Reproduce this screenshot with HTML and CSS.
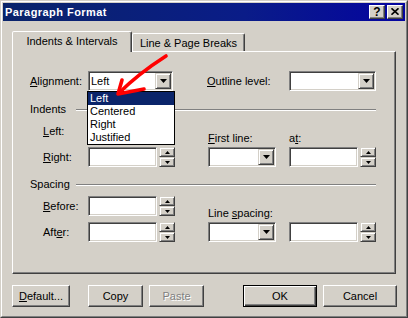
FILE: index.html
```html
<!DOCTYPE html>
<html>
<head>
<meta charset="utf-8">
<title>Paragraph Format</title>
<link rel="stylesheet" href="styles.css">
</head>
<body>
<div class="window">
  <div class="frame">
    <div class="titlebar">
      <span class="title">Paragraph Format</span>
      <div class="tbtns">
        <div class="tbtn help">?</div>
        <div class="tbtn close">
          <svg width="8" height="7" viewBox="0 0 8 7"><path d="M0.5 0.3 L7.5 6.7 M7.5 0.3 L0.5 6.7" stroke="#000" stroke-width="1.6" fill="none"/></svg>
        </div>
      </div>
    </div>
    <div class="content">
      <div class="tabs">
        <div class="tab active">Indents &amp; Intervals</div>
        <div class="tab second">Line &amp; Page Breaks</div>
      </div>
      <div class="panel">
        <div class="row">
          <span class="lbl w-align"><u>A</u>lignment:</span>
          <div class="combo w85 open">
            <span class="ctext">Left</span>
            <span class="dbtn"><svg width="7" height="4" viewBox="0 0 7 4"><polygon points="0,0 7,0 3.5,4" fill="#000"/></svg></span>
            <ul class="list">
              <li class="sel">Left</li>
              <li>Centered</li>
              <li>Right</li>
              <li>Justified</li>
            </ul>
          </div>
          <span class="lbl w-outline"><u>O</u>utline level:</span>
          <div class="combo w87">
            <span class="ctext"></span>
            <span class="dbtn"><svg width="7" height="4" viewBox="0 0 7 4"><polygon points="0,0 7,0 3.5,4" fill="#000"/></svg></span>
          </div>
        </div>

        <div class="group first"><span class="gtitle">Indents</span><span class="etch"></span></div>
        <div class="section">
          <div class="col-left">
            <div class="frow">
              <span class="lbl w-fl"><u>L</u>eft:</span>
              <div class="spinedit">
                <div class="edit"></div>
                <div class="spin">
                  <div class="sbtn"><svg width="5" height="3" viewBox="0 0 5 3"><polygon points="0,3 5,3 2.5,0" fill="#000"/></svg></div>
                  <div class="sbtn"><svg width="5" height="3" viewBox="0 0 5 3"><polygon points="0,0 5,0 2.5,3" fill="#000"/></svg></div>
                </div>
              </div>
            </div>
            <div class="frow">
              <span class="lbl w-fl"><u>R</u>ight:</span>
              <div class="spinedit">
                <div class="edit"></div>
                <div class="spin">
                  <div class="sbtn"><svg width="5" height="3" viewBox="0 0 5 3"><polygon points="0,3 5,3 2.5,0" fill="#000"/></svg></div>
                  <div class="sbtn"><svg width="5" height="3" viewBox="0 0 5 3"><polygon points="0,0 5,0 2.5,3" fill="#000"/></svg></div>
                </div>
              </div>
            </div>
          </div>
          <div class="col-right">
            <div class="fcol">
              <span class="lbl"><u>F</u>irst line:</span>
              <div class="combo w68">
                <span class="ctext"></span>
                <span class="dbtn"><svg width="7" height="4" viewBox="0 0 7 4"><polygon points="0,0 7,0 3.5,4" fill="#000"/></svg></span>
              </div>
            </div>
            <div class="fcol">
              <span class="lbl">a<u>t</u>:</span>
              <div class="spinedit">
                <div class="edit"></div>
                <div class="spin">
                  <div class="sbtn"><svg width="5" height="3" viewBox="0 0 5 3"><polygon points="0,3 5,3 2.5,0" fill="#000"/></svg></div>
                  <div class="sbtn"><svg width="5" height="3" viewBox="0 0 5 3"><polygon points="0,0 5,0 2.5,3" fill="#000"/></svg></div>
                </div>
              </div>
            </div>
          </div>
        </div>

        <div class="group second"><span class="gtitle">Spacing</span><span class="etch"></span></div>
        <div class="section">
          <div class="col-left">
            <div class="frow">
              <span class="lbl w-fl"><u>B</u>efore:</span>
              <div class="spinedit">
                <div class="edit"></div>
                <div class="spin">
                  <div class="sbtn"><svg width="5" height="3" viewBox="0 0 5 3"><polygon points="0,3 5,3 2.5,0" fill="#000"/></svg></div>
                  <div class="sbtn"><svg width="5" height="3" viewBox="0 0 5 3"><polygon points="0,0 5,0 2.5,3" fill="#000"/></svg></div>
                </div>
              </div>
            </div>
            <div class="frow">
              <span class="lbl w-fl">Aft<u>e</u>r:</span>
              <div class="spinedit">
                <div class="edit"></div>
                <div class="spin">
                  <div class="sbtn"><svg width="5" height="3" viewBox="0 0 5 3"><polygon points="0,3 5,3 2.5,0" fill="#000"/></svg></div>
                  <div class="sbtn"><svg width="5" height="3" viewBox="0 0 5 3"><polygon points="0,0 5,0 2.5,3" fill="#000"/></svg></div>
                </div>
              </div>
            </div>
          </div>
          <div class="col-right">
            <div class="fcol">
              <span class="lbl">Line <u>s</u>pacing:</span>
              <div class="combo w68">
                <span class="ctext"></span>
                <span class="dbtn"><svg width="7" height="4" viewBox="0 0 7 4"><polygon points="0,0 7,0 3.5,4" fill="#000"/></svg></span>
              </div>
            </div>
            <div class="fcol">
              <span class="lbl">&nbsp;</span>
              <div class="spinedit">
                <div class="edit"></div>
                <div class="spin">
                  <div class="sbtn"><svg width="5" height="3" viewBox="0 0 5 3"><polygon points="0,3 5,3 2.5,0" fill="#000"/></svg></div>
                  <div class="sbtn"><svg width="5" height="3" viewBox="0 0 5 3"><polygon points="0,0 5,0 2.5,3" fill="#000"/></svg></div>
                </div>
              </div>
            </div>
          </div>
        </div>
      </div>

      <div class="buttons">
        <div class="btn b-default"><span><u>D</u>efault...</span></div>
        <div class="btn b-copy">Copy</div>
        <div class="btn b-paste disabled">Paste</div>
        <div class="btn b-ok default">OK</div>
        <div class="btn b-cancel">Cancel</div>
      </div>
    </div>
  </div>
</div>
<svg class="arrow" width="408" height="318" viewBox="0 0 408 318">
  <path d="M166 56 C 152 65, 136 76, 119 93" stroke="#ff0000" stroke-width="3.6" fill="none" stroke-linecap="round"/>
  <path d="M122 80 L118 94 L144 89" stroke="#ff0000" stroke-width="3.6" fill="none" stroke-linecap="round" stroke-linejoin="round"/>
</svg>
</body>
</html>
```

FILE: styles.css
```css
* { box-sizing: border-box; }
html, body { margin: 0; padding: 0; }
body {
  width: 408px;
  height: 318px;
  overflow: hidden;
  position: relative;
  background: #d4d0c8;
  font-family: "Liberation Sans", Arial, sans-serif;
  font-size: 11px;
  color: #000;
}
.window {
  width: 408px;
  height: 318px;
  border: 1px solid;
  border-color: #d4d0c8 #404040 #404040 #d4d0c8;
  background: #d4d0c8;
}
.frame {
  height: 100%;
  border: 1px solid;
  border-color: #fff #808080 #808080 #fff;
  padding: 1px;
  display: flex;
  flex-direction: column;
}
.titlebar {
  height: 18px;
  flex: none;
  background: linear-gradient(to right, #0a246a 0%, #0a1c88 60%, #0404a0 100%);
  display: flex;
  align-items: center;
  justify-content: space-between;
  padding: 0 2px;
}
.title {
  color: #fff;
  font-weight: bold;
  font-size: 11px;
  letter-spacing: 0.45px;
  line-height: 18px;
  white-space: nowrap;
}
.tbtns { display: flex; gap: 2px; }
.tbtn {
  width: 16px;
  height: 14px;
  background: #d4d0c8;
  border: 1px solid;
  border-color: #fff #404040 #404040 #fff;
  box-shadow: inset -1px -1px #808080;
  display: flex;
  align-items: center;
  justify-content: center;
}
.help {
  font-weight: bold;
  font-size: 12px;
  line-height: 12px;
  padding-bottom: 1px;
}
.close svg { display: block; margin-bottom: 1px; }

.content {
  flex: 1;
  padding: 10px 9px 0 9px;
  display: flex;
  flex-direction: column;
}
.tabs {
  display: flex;
  align-items: flex-end;
  height: 20px;
  position: relative;
  z-index: 1;
}
.tab {
  height: 18px;
  padding-top: 3px;
  text-align: center;
  line-height: 13px;
  white-space: nowrap;
  background: #d4d0c8;
  border: 1px solid;
  border-bottom: none;
  border-color: #fff #404040 transparent #fff;
  box-shadow: inset -1px 0 #808080;
  border-radius: 2px 2px 0 0;
}
.tab.active { width: 120px; height: 21px; margin-bottom: -1px; }
.tab.second { width: 113px; }

.panel {
  height: 223px;
  flex: none;
  border: 1px solid;
  border-color: #fff #404040 #404040 #fff;
  box-shadow: inset -1px -1px #808080;
  padding: 19px 19px 0 17px;
  position: relative;
}
.row { display: flex; align-items: center; height: 20px; }
.lbl { line-height: 13px; white-space: nowrap; display: block; }
.w-align { width: 58px; }
.w-outline { width: 82px; margin-left: 34px; }
.w-fl { width: 45px; }

.combo {
  position: relative;
  height: 20px;
  background: #fff;
  border: 1px solid;
  border-color: #808080 #fff #fff #808080;
  box-shadow: inset 1px 1px #404040, inset -1px -1px #d4d0c8;
  padding: 1px;
  display: flex;
}
.w85 { width: 85px; }
.w87 { width: 87px; }
.w68 { width: 68px; }
.ctext { flex: 1; line-height: 16px; padding-left: 1px; }
.dbtn {
  width: 16px;
  height: 16px;
  background: #d4d0c8;
  border: 1px solid;
  border-color: #d4d0c8 #404040 #404040 #d4d0c8;
  box-shadow: inset 1px 1px #fff, inset -1px -1px #808080;
  display: flex;
  align-items: center;
  justify-content: center;
}
.dbtn svg { display: block; }
.list {
  position: absolute;
  top: 19px;
  left: -2px;
  width: 88px;
  margin: 0;
  padding: 0;
  list-style: none;
  background: #fff;
  border: 1px solid #000;
  z-index: 5;
  color: #000;
}
.list li { height: 13px; line-height: 13px; padding-left: 2px; }
.list li.sel { background: #0a246a; color: #fff; }

.group { display: flex; align-items: center; height: 13px; }
.group.first { margin-top: 12px; }
.group.second { margin-top: 11px; }
.gtitle { width: 46px; line-height: 13px; }
.etch {
  flex: 1;
  height: 2px;
  border-top: 1px solid #808080;
  border-bottom: 1px solid #fff;
}
.section { display: flex; height: 46px; margin-top: 5px; }
.col-left { display: flex; flex-direction: column; gap: 6px; margin-left: 13px; }
.frow { display: flex; align-items: center; height: 20px; }
.col-right { display: flex; gap: 13px; margin-left: 33px; }
.fcol { display: flex; flex-direction: column; justify-content: flex-end; gap: 2px; }

.spinedit { display: flex; gap: 2px; }
.edit {
  width: 69px;
  height: 20px;
  background: #fff;
  border: 1px solid;
  border-color: #808080 #fff #fff #808080;
  box-shadow: inset 1px 1px #404040, inset -1px -1px #d4d0c8;
}
.spin { display: flex; flex-direction: column; width: 16px; height: 20px; }
.sbtn {
  height: 10px;
  background: #d4d0c8;
  border: 1px solid;
  border-color: #d4d0c8 #404040 #404040 #d4d0c8;
  box-shadow: inset 1px 1px #fff, inset -1px -1px #808080;
  display: flex;
  align-items: center;
  justify-content: center;
}
.sbtn svg { display: block; }

.buttons {
  display: flex;
  margin-top: 11px;
  margin-right: -1px;
  height: 22px;
}
.btn {
  height: 22px;
  background: #d4d0c8;
  border: 1px solid;
  border-color: #fff #404040 #404040 #fff;
  box-shadow: inset -1px -1px #808080;
  display: flex;
  align-items: center;
  justify-content: center;
  line-height: 13px;
  white-space: nowrap;
}
.b-default { width: 58px; }
.b-copy { width: 55px; margin-left: 18px; }
.b-paste { width: 55px; margin-left: 6px; }
.b-ok { width: 74px; margin-left: auto; }
.b-cancel { width: 74px; margin-left: 6px; }
.btn.default {
  border-color: #000;
  box-shadow: inset 1px 1px #fff, inset -1px -1px #404040, inset -2px -2px #808080;
}
.btn.disabled { color: #808080; text-shadow: 1px 1px #fff; }

.arrow {
  position: absolute;
  left: 0;
  top: 0;
  pointer-events: none;
  z-index: 10;
}
```
